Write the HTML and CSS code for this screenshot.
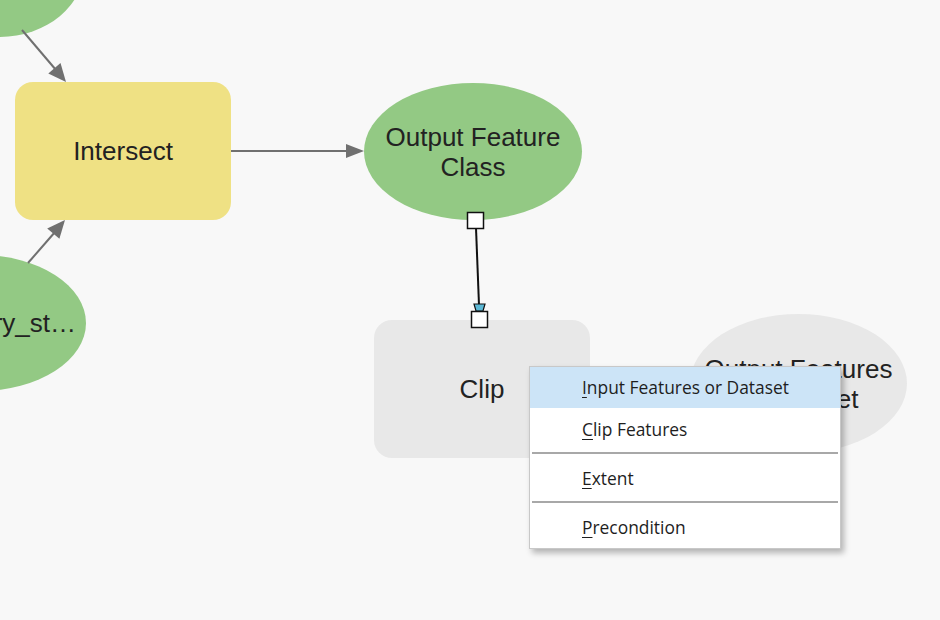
FILE: index.html
```html
<!DOCTYPE html>
<html lang="en">
<head>
    <meta charset="UTF-8">
    <title>Model</title>
    <link rel="stylesheet" href="styles.css">
</head>
<body>

<div class="canvas">
    <!-- Nodes -->
    <div class="node ellipse green" id="top-input"></div>
    <div class="node box yellow" id="intersect"><span>Intersect</span></div>
    <div class="node ellipse green" id="output-fc"><span>Output Feature<br>Class</span></div>
    <div class="node ellipse green" id="study"><span>Boundary_st…</span></div>
    <div class="node box grey" id="clip"><span>Clip</span></div>
    <div class="node ellipse grey" id="clip-out"><span>Output Features<br>or Dataset</span></div>

    <!-- Connectors -->
    <svg class="links" width="940" height="620" viewBox="0 0 940 620">
        <line x1="22" y1="30" x2="56" y2="70" class="edge"/>
        <polygon points="66,82 48.3,73.5 60.5,63.1" class="head"/>
        <line x1="28" y1="263" x2="55" y2="232" class="edge"/>
        <polygon points="65,220 59.4,238.8 47.2,228.4" class="head"/>
        <line x1="231" y1="151" x2="348" y2="151" class="edge"/>
        <polygon points="364,151 346,144 346,158" class="head"/>

        <!-- link being dragged -->
        <line x1="476" y1="228" x2="479" y2="305" class="drag"/>
        <rect x="467.5" y="212.5" width="16" height="16" class="handle"/>
        <polygon points="474,304 485,304 483,311 476,311" class="tip"/>
        <rect x="471.5" y="311.5" width="16" height="16" class="handle"/>
    </svg>

    <!-- Context menu -->
    <div class="menu">
        <div class="item active"><u>I</u>nput Features or Dataset</div>
        <div class="item"><u>C</u>lip Features</div>
        <div class="sep"></div>
        <div class="item"><u>E</u>xtent</div>
        <div class="sep"></div>
        <div class="item"><u>P</u>recondition</div>
    </div>
</div>

</body>
</html>
```

FILE: styles.css
```css
* {
    margin: 0;
    padding: 0;
    box-sizing: border-box;
}
body {
    background: #f8f8f8;
    font-family: "Liberation Sans", Arial, sans-serif;
    overflow: hidden;
}
.canvas {
    position: relative;
    width: 940px;
    height: 620px;
    overflow: hidden;
}
/* Nodes sit on a free canvas */
.node {
    position: absolute;
    display: flex;
    align-items: center;
    justify-content: center;
    text-align: center;
    font-size: 26px;
    line-height: 30px;
    color: #222;
}
.ellipse {
    border-radius: 50%;
}
.box {
    border-radius: 18px;
}
.green {
    background: #93c984;
}
.yellow {
    background: #efe184;
}
.grey {
    background: #e8e8e8;
}
#top-input {
    left: -85px;
    top: -107px;
    width: 170px;
    height: 144px;
}
#intersect {
    left: 15px;
    top: 82px;
    width: 216px;
    height: 138px;
}
#output-fc {
    left: 364px;
    top: 83px;
    width: 218px;
    height: 137px;
}
#study {
    left: -126px;
    top: 255px;
    width: 212px;
    height: 136px;
}
#study span {
    padding-left: 20px;
}
#clip {
    left: 374px;
    top: 320px;
    width: 216px;
    height: 138px;
}
#clip-out {
    left: 690px;
    top: 314px;
    width: 217px;
    height: 139px;
}
.links {
    position: absolute;
    left: 0;
    top: 0;
}
.edge {
    stroke: #707070;
    stroke-width: 2;
}
.head {
    fill: #707070;
}
.drag {
    stroke: #111;
    stroke-width: 2;
}
.handle {
    fill: #fff;
    stroke: #111;
    stroke-width: 1.5;
}
.tip {
    fill: #5cb9d6;
    stroke: #111;
    stroke-width: 1.2;
}
/* Context menu */
.menu {
    position: absolute;
    left: 529px;
    top: 366px;
    width: 312px;
    background: #fff;
    border: 1px solid #c8c8c8;
    box-shadow: 3px 4px 6px rgba(0, 0, 0, 0.28);
    font-family: "Open Sans", "Noto Sans", sans-serif;
    font-size: 17.4px;
    color: #1e1e1e;
}
.item {
    height: 42px;
    line-height: 42px;
    padding-left: 52px;
}
.item u {
    text-underline-offset: 3px;
}
.item.active {
    height: 41px;
    line-height: 41px;
    background: #cce4f7;
}
.sep {
    height: 2px;
    margin: 2px 2px 3px;
    border-top: 2px solid #a8a8a8;
}
```
